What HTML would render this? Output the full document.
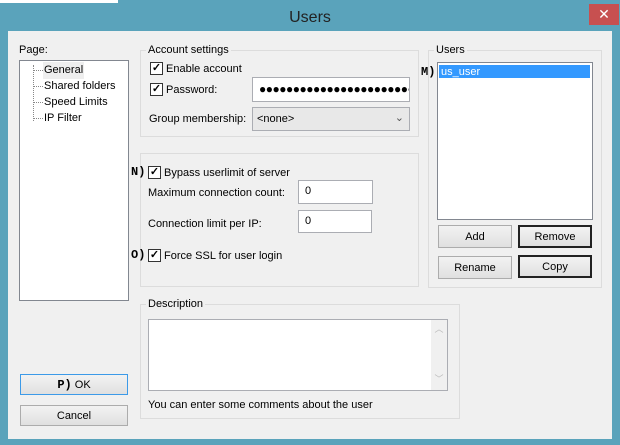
<!DOCTYPE html><html><head><style>
*{box-sizing:border-box}
body{margin:0;width:620px;height:445px;background:#5aa3bb;font-family:"Liberation Sans",sans-serif;font-size:11px;line-height:17px;color:#000;position:relative;overflow:hidden}
.a{position:absolute}
.grp{position:absolute;border:1px solid #dcdcdc}
.lg{position:absolute;background:#f0f0f0;padding:0 2px;top:-9px;left:5px}
.in{position:absolute;background:#fff;border:1px solid #abadb3}
.btn{position:absolute;background:linear-gradient(#f2f2f2,#e0e0e0);border:1px solid #acacac;text-align:center;line-height:22px}
.cb{position:absolute;width:13px;height:13px;border:1px solid #333;background:#fff;font-size:11px;line-height:11px;text-align:center;font-weight:bold}
b{font-family:"Liberation Mono",monospace;font-weight:bold;font-size:12px}
</style></head><body>
<div class="a" style="left:0;top:0;width:118px;height:3px;background:#fff"></div>
<div class="a" style="left:0;top:9px;width:620px;text-align:center;font-size:16px;color:#222">Users</div>
<div class="a" style="left:589px;top:4px;width:30px;height:21px;background:#c75050;color:#fff;text-align:center;font-size:14px;line-height:20px">✕</div>
<div class="a" style="left:8px;top:31px;width:604px;height:408px;background:#f0f0f0"></div>
<div class="a" style="left:19px;top:42px">Page:</div>
<div class="in" style="left:19px;top:60px;width:110px;height:241px;border-color:#828790"></div>
<div class="a" style="left:33px;top:65px;height:56px;border-left:1px dotted #888"></div>
<div class="a" style="left:33px;top:70px;width:10px;border-top:1px dotted #888"></div>
<div class="a" style="left:33px;top:86px;width:10px;border-top:1px dotted #888"></div>
<div class="a" style="left:33px;top:102px;width:10px;border-top:1px dotted #888"></div>
<div class="a" style="left:33px;top:118px;width:10px;border-top:1px dotted #888"></div>
<div class="a" style="left:43px;top:62px;background:#eee;padding:0 1px">General</div>
<div class="a" style="left:44px;top:78px">Shared folders</div>
<div class="a" style="left:44px;top:94px">Speed Limits</div>
<div class="a" style="left:44px;top:110px">IP Filter</div>

<div class="grp" style="left:140px;top:50px;width:279px;height:87px"><span class="lg">Account settings</span></div>
<div class="cb" style="left:150px;top:62px">✓</div><div class="a" style="left:166px;top:61px">Enable account</div>
<div class="cb" style="left:150px;top:83px">✓</div><div class="a" style="left:166px;top:82px">Password:</div>
<div class="in" style="left:252px;top:77px;width:158px;height:25px;overflow:hidden;white-space:nowrap;padding:3px 0 0 6px;font-size:12px;letter-spacing:-0.5px">●●●●●●●●●●●●●●●●●●●●●●●●</div>
<div class="a" style="left:149px;top:111px">Group membership:</div>
<div class="in" style="left:252px;top:107px;width:158px;height:24px;background:#e8e8e8;padding:3px 0 0 4px">&lt;none&gt;<span class="a" style="right:5px;top:2px;color:#555">⌄</span></div>

<div class="grp" style="left:140px;top:153px;width:279px;height:134px"></div>
<b class="a" style="left:131px;top:164px">N)</b><div class="cb" style="left:148px;top:166px">✓</div><div class="a" style="left:164px;top:165px">Bypass userlimit of server</div>
<div class="a" style="left:148px;top:185px">Maximum connection count:</div>
<div class="in" style="left:298px;top:180px;width:75px;height:24px;padding:2px 0 0 6px">0</div>
<div class="a" style="left:148px;top:216px">Connection limit per IP:</div>
<div class="in" style="left:298px;top:210px;width:74px;height:23px;padding:2px 0 0 6px">0</div>
<b class="a" style="left:131px;top:247px">O)</b><div class="cb" style="left:148px;top:249px">✓</div><div class="a" style="left:164px;top:248px">Force SSL for user login</div>

<div class="grp" style="left:428px;top:50px;width:174px;height:238px"><span class="lg">Users</span></div>
<div class="in" style="left:437px;top:62px;width:156px;height:158px;border-color:#828790"></div>
<div class="a" style="left:439px;top:65px;width:151px;height:13px;background:#3399ff;color:#fff;padding-left:2px;line-height:14px">us_user</div>
<b class="a" style="left:421px;top:64px">M)</b>
<div class="btn" style="left:438px;top:225px;width:74px;height:23px">Add</div>
<div class="btn" style="left:518px;top:225px;width:74px;height:23px;border:2px solid #222;line-height:21px">Remove</div>
<div class="btn" style="left:438px;top:256px;width:74px;height:23px">Rename</div>
<div class="btn" style="left:518px;top:255px;width:74px;height:23px;border:2px solid #222;line-height:21px">Copy</div>

<div class="grp" style="left:140px;top:304px;width:320px;height:115px"><span class="lg">Description</span></div>
<div class="in" style="left:148px;top:319px;width:300px;height:72px"><div class="a" style="right:0;top:0;width:16px;height:70px;background:#f0f0f0;color:#bbb;text-align:center;font-size:9px;line-height:12px"><div style="margin-top:3px">︿</div><div style="margin-top:38px">﹀</div></div></div>
<div class="a" style="left:148px;top:397px">You can enter some comments about the user</div>

<div class="btn" style="left:20px;top:374px;width:108px;height:21px;border-color:#3c9ae8;line-height:20px"><b>P)</b> OK</div>
<div class="btn" style="left:20px;top:405px;width:108px;height:21px;line-height:20px">Cancel</div>
</body></html>
